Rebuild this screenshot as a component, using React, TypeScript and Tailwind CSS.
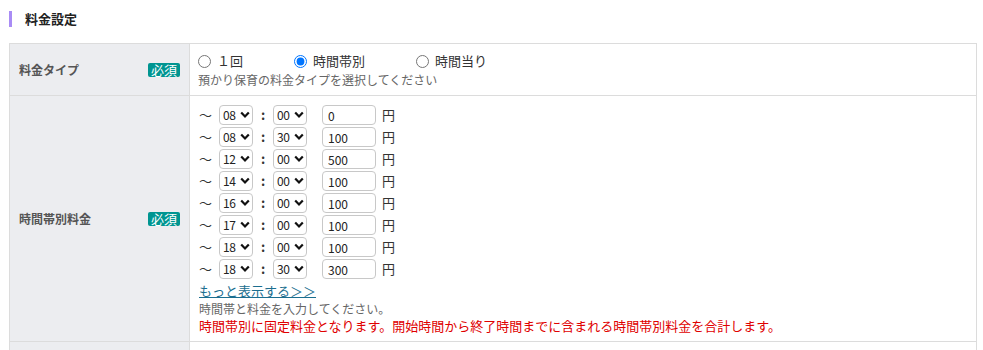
import { ReactNode } from "react";

const rows = [
  { h: "08", m: "00", fee: "0" },
  { h: "08", m: "30", fee: "100" },
  { h: "12", m: "00", fee: "500" },
  { h: "14", m: "00", fee: "100" },
  { h: "16", m: "00", fee: "100" },
  { h: "17", m: "00", fee: "100" },
  { h: "18", m: "00", fee: "100" },
  { h: "18", m: "30", fee: "300" },
];

function Badge() {
  return (
    <span className="inline-flex h-[14px] w-[32px] items-center justify-center rounded-[2px] bg-[#009591] text-[13px] leading-none text-white">
      必須
    </span>
  );
}

function Label({ children }: { children: ReactNode }) {
  return (
    <div className="flex w-[180px] shrink-0 items-center justify-between border-r border-[#dcdcdc] bg-[#ecedf0] pl-[9px] pr-[9px]">
      <span className="text-[12px] font-bold text-[#555]">{children}</span>
      <Badge />
    </div>
  );
}

function Chevron() {
  return (
    <svg className="pointer-events-none absolute right-[3px] top-[6px]" width="10" height="8" viewBox="0 0 10 8">
      <path d="M1.2 1.5 L5 5.5 L8.8 1.5" fill="none" stroke="#111" strokeWidth="2.2" />
    </svg>
  );
}

function Select({ value }: { value: string }) {
  return (
    <div className="relative h-[20px] w-[34px]">
      <select
        defaultValue={value}
        className="h-full w-full appearance-none rounded-[4px] border border-[#c8c8c8] bg-white pl-[3px] text-[12px] tracking-[-0.5px] text-[#222] outline-none"
      >
        <option value={value}>{value}</option>
      </select>
      <Chevron />
    </div>
  );
}

function Radio({ label, checked }: { label: string; checked?: boolean }) {
  return (
    <label className="flex items-center gap-[6px]">
      <input type="radio" name="type" defaultChecked={checked} className="m-0 h-[13px] w-[13px] accent-[#0075ff]" />
      <span>{label}</span>
    </label>
  );
}

export default function App() {
  return (
    <div className="min-h-[350px] bg-white pl-[9px] pr-[6px] pt-[11px] font-['Noto_Sans_CJK_JP','Noto_Sans',sans-serif] text-[13px] text-[#333]">
      <div className="flex h-[16px] items-center">
        <div className="h-[16px] w-[3px] bg-[#a98cf5]" />
        <h2 className="ml-[13px] text-[13px] font-bold text-[#222]">料金設定</h2>
      </div>

      <div className="mt-[16px] w-[968px] border border-[#dcdcdc]">
        <div className="flex h-[52px] border-b border-[#dcdcdc]">
          <Label>料金タイプ</Label>
          <div className="flex flex-col pl-[8px] pt-[7px]">
            <div className="flex h-[20px] items-center">
              <div className="w-[96px]">
                <Radio label="１回" />
              </div>
              <div className="w-[122px]">
                <Radio label="時間帯別" checked />
              </div>
              <Radio label="時間当り" />
            </div>
            <p className="mt-[0px] text-[12px] leading-[18px] text-[#666]">預かり保育の料金タイプを選択してください</p>
          </div>
        </div>

        <div className="flex h-[246px] border-b border-[#dcdcdc]">
          <Label>時間帯別料金</Label>
          <div className="flex flex-col pl-[9px] pt-[8px]">
            {rows.map((r, i) => (
              <div key={i} className="flex h-[22px] items-center">
                <span className="w-[20px] text-[13px]">～</span>
                <Select value={r.h} />
                <span className="w-[20px] text-center font-bold">:</span>
                <Select value={r.m} />
                <input
                  defaultValue={r.fee}
                  className="ml-[15px] h-[20px] w-[54px] rounded-[4px] border border-[#c8c8c8] px-[5px] text-[12px] text-[#222] outline-none"
                />
                <span className="ml-[6px] text-[13px]">円</span>
              </div>
            ))}
            <a href="#" className="mt-[2px] leading-[18px] text-[#1b6e8f] underline">もっと表示する＞＞</a>
            <p className="text-[12px] leading-[17px] text-[#666]">時間帯と料金を入力してください。</p>
            <p className="leading-[17px] text-[#e00000]">時間帯別に固定料金となります。開始時間から終了時間までに含まれる時間帯別料金を合計します。</p>
          </div>
        </div>

        <div className="flex h-[20px]">
          <div className="w-[180px] border-r border-[#dcdcdc] bg-[#ecedf0]" />
        </div>
      </div>
    </div>
  );
}
